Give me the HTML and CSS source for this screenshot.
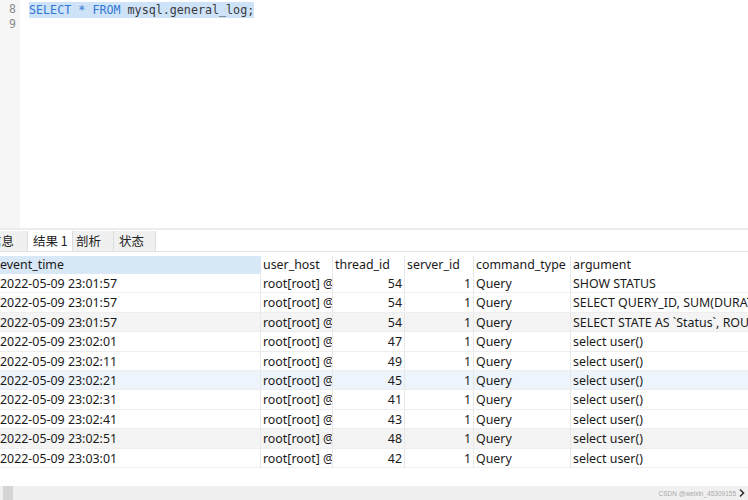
FILE: index.html
```html
<!DOCTYPE html>
<html>
<head>
<meta charset="utf-8">
<link rel="stylesheet" href="styles.css">
</head>
<body>
<div class="editor">
  <div class="gutter">
    <div class="ln">8</div>
    <div class="ln">9</div>
  </div>
  <div class="code">
    <div class="line"><span class="sel"><span class="kw">SELECT</span> <span class="kw">*</span> <span class="kw">FROM</span> mysql.general_log;</span></div>
    <div class="line"></div>
  </div>
</div>
<div class="divider"></div>
<div class="tabs">
  <div class="tab first">信息</div>
  <div class="tab active">结果 1</div>
  <div class="tab t3">剖析</div>
  <div class="tab t4">状态</div>
</div>
<div class="grid">
  <div class="row head">
    <div class="c c1 hl">event_time</div><div class="c">user_host</div><div class="c">thread_id</div><div class="c">server_id</div><div class="c">command_type</div><div class="c last">argument</div>
  </div>
  <div class="row"><div class="c c1">2022-05-09 23:01:57</div><div class="c">root[root] @</div><div class="c r">54</div><div class="c r">1</div><div class="c">Query</div><div class="c last">SHOW STATUS</div></div>
  <div class="row"><div class="c c1">2022-05-09 23:01:57</div><div class="c">root[root] @</div><div class="c r">54</div><div class="c r">1</div><div class="c">Query</div><div class="c last">SELECT QUERY_ID, SUM(DURATION) AS SUM_DURATION</div></div>
  <div class="row gray"><div class="c c1">2022-05-09 23:01:57</div><div class="c">root[root] @</div><div class="c r">54</div><div class="c r">1</div><div class="c">Query</div><div class="c last">SELECT STATE AS `Status`, ROUND(SUM(DURATION),7)</div></div>
  <div class="row"><div class="c c1">2022-05-09 23:02:01</div><div class="c">root[root] @</div><div class="c r">47</div><div class="c r">1</div><div class="c">Query</div><div class="c last">select user()</div></div>
  <div class="row"><div class="c c1">2022-05-09 23:02:11</div><div class="c">root[root] @</div><div class="c r">49</div><div class="c r">1</div><div class="c">Query</div><div class="c last">select user()</div></div>
  <div class="row blue"><div class="c c1">2022-05-09 23:02:21</div><div class="c">root[root] @</div><div class="c r">45</div><div class="c r">1</div><div class="c">Query</div><div class="c last">select user()</div></div>
  <div class="row"><div class="c c1">2022-05-09 23:02:31</div><div class="c">root[root] @</div><div class="c r">41</div><div class="c r">1</div><div class="c">Query</div><div class="c last">select user()</div></div>
  <div class="row"><div class="c c1">2022-05-09 23:02:41</div><div class="c">root[root] @</div><div class="c r">43</div><div class="c r">1</div><div class="c">Query</div><div class="c last">select user()</div></div>
  <div class="row gray"><div class="c c1">2022-05-09 23:02:51</div><div class="c">root[root] @</div><div class="c r">48</div><div class="c r">1</div><div class="c">Query</div><div class="c last">select user()</div></div>
  <div class="row"><div class="c c1">2022-05-09 23:03:01</div><div class="c">root[root] @</div><div class="c r">42</div><div class="c r">1</div><div class="c">Query</div><div class="c last">select user()</div></div>
</div>
<div class="spacer"></div>
<div class="hscroll">
  <div class="thumb"></div>
  <div class="wm">CSDN @weixin_45309155</div>
  <svg class="arrow" width="8" height="10" viewBox="0 0 8 10"><path d="M2 1.5 L5.5 5 L2 8.5" fill="none" stroke="#333" stroke-width="1.6"/></svg>
</div>
</body>
</html>
```

FILE: styles.css
```css
html, body {
  margin: 0;
  padding: 0;
  background: #fff;
  overflow: hidden;
  width: 748px;
  height: 500px;
}
body {
  font-family: "Noto Sans", "Noto Sans CJK SC", sans-serif;
  color: #1a1a1a;
  display: flex;
  flex-direction: column;
}
.editor {
  height: 228px;
  display: flex;
  flex: none;
}
.gutter {
  width: 20px;
  background: #f6f6f6;
  padding-top: 2px;
  box-sizing: border-box;
}
.ln {
  height: 15px;
  line-height: 15px;
  font-family: "DejaVu Sans Mono", monospace;
  font-size: 11.5px;
  color: #8a8a8a;
  padding-left: 9px;
}
.code {
  flex: 1;
  padding-top: 2px;
  padding-left: 9px;
}
.line {
  height: 15px;
  line-height: 15px;
  font-family: "DejaVu Sans Mono", monospace;
  font-size: 11.7px;
  color: #3a3a3a;
  white-space: pre;
}
.sel {
  background: #cfe3f8;
  display: inline-block;
  height: 16px;
  line-height: 16px;
}
.kw { color: #2f78d4; }
.divider {
  height: 2px;
  background: #ececec;
  flex: none;
}
.tabs {
  display: flex;
  height: 20px;
  margin-top: 1px;
  border-bottom: 1px solid #e2e2e2;
  flex: none;
  font-family: "Noto Sans CJK SC", sans-serif;
  font-size: 12.5px;
}
.tab {
  background: #f0f0f0;
  border-right: 1px solid #dcdcdc;
  line-height: 20px;
  color: #222;
  white-space: nowrap;
  box-sizing: border-box;
  flex: none;
}
.tab.first {
  margin-left: -14px;
  width: 42px;
  padding-left: 3px;
}
.tab.active {
  background: #fff;
  padding-left: 5px;
  width: 45px;
}
.tab.t3 { width: 41px; padding-left: 3px; }
.tab.t4 { width: 42px; padding-left: 5px; }
.grid {
  margin-top: 4px;
  margin-left: -2px;
  flex: none;
  font-size: 12.4px;
}
.row {
  display: grid;
  grid-template-columns: 263px 72px 72px 69px 97px 200px;
  height: 19.4px;
  line-height: 19px;
  border-bottom: 1px solid #eeeeee;
  box-sizing: border-box;
}
.row.head {
  height: 18px;
  line-height: 18px;
  border-bottom: none;
}
.row.gray { background: #f4f4f4; }
.row.blue { background: #eef4fb; }
.c {
  padding: 0 2px 0 2px;
  border-right: 1px solid #e8e8e8;
  white-space: nowrap;
  overflow: hidden;
}
.c.last { border-right: none; }
.c.r { text-align: right; }
.hl { background: #d9e8f7; border-right: 1px solid #d9e8f7; }
.spacer { flex: 1; }
.hscroll {
  height: 14px;
  background: #f0f0f0;
  display: flex;
  align-items: center;
  flex: none;
}
.thumb {
  width: 10px;
  height: 14px;
  background: #d4d4d4;
  margin-left: 3px;
}
.wm {
  margin-left: auto;
  font-size: 6.5px;
  color: #aaa;
  margin-right: 2px;
  font-family: "Liberation Sans", sans-serif;
}
.arrow {
  margin-right: 2px;
}
```
